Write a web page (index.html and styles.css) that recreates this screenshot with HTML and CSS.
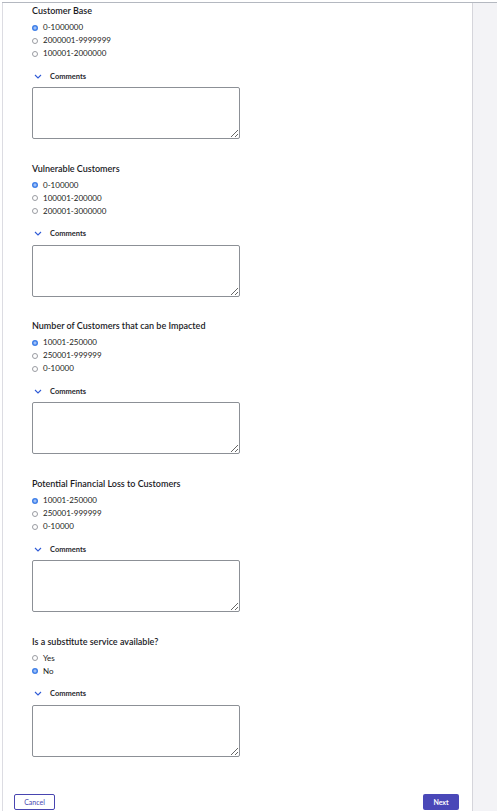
FILE: index.html
```html
<!DOCTYPE html>
<html lang="en">
<head>
  <meta charset="UTF-8">
  <meta name="viewport" content="width=device-width, initial-scale=1.0">
  <link rel="stylesheet" href="styles.css">
</head>
<body>
  <div class="page">
    <div class="main">

      <div class="question">
        <div class="q-title">Customer Base</div>
        <div class="options">
          <div class="option"><span class="radio checked"></span>0-1000000</div>
          <div class="option"><span class="radio"></span>2000001-9999999</div>
          <div class="option"><span class="radio"></span>100001-2000000</div>
        </div>
        <div class="comments-toggle">
          <svg class="chevron" width="8" height="5" viewBox="0 0 8 5"><path d="M1 1 L4 4 L7 1" fill="none" stroke="#2f5bd6" stroke-width="1.1"/></svg>
          Comments
        </div>
        <textarea class="comment-box"></textarea>
      </div>

      <div class="question">
        <div class="q-title">Vulnerable Customers</div>
        <div class="options">
          <div class="option"><span class="radio checked"></span>0-100000</div>
          <div class="option"><span class="radio"></span>100001-200000</div>
          <div class="option"><span class="radio"></span>200001-3000000</div>
        </div>
        <div class="comments-toggle">
          <svg class="chevron" width="8" height="5" viewBox="0 0 8 5"><path d="M1 1 L4 4 L7 1" fill="none" stroke="#2f5bd6" stroke-width="1.1"/></svg>
          Comments
        </div>
        <textarea class="comment-box"></textarea>
      </div>

      <div class="question">
        <div class="q-title">Number of Customers that can be Impacted</div>
        <div class="options">
          <div class="option"><span class="radio checked"></span>10001-250000</div>
          <div class="option"><span class="radio"></span>250001-999999</div>
          <div class="option"><span class="radio"></span>0-10000</div>
        </div>
        <div class="comments-toggle">
          <svg class="chevron" width="8" height="5" viewBox="0 0 8 5"><path d="M1 1 L4 4 L7 1" fill="none" stroke="#2f5bd6" stroke-width="1.1"/></svg>
          Comments
        </div>
        <textarea class="comment-box"></textarea>
      </div>

      <div class="question">
        <div class="q-title">Potential Financial Loss to Customers</div>
        <div class="options">
          <div class="option"><span class="radio checked"></span>10001-250000</div>
          <div class="option"><span class="radio"></span>250001-999999</div>
          <div class="option"><span class="radio"></span>0-10000</div>
        </div>
        <div class="comments-toggle">
          <svg class="chevron" width="8" height="5" viewBox="0 0 8 5"><path d="M1 1 L4 4 L7 1" fill="none" stroke="#2f5bd6" stroke-width="1.1"/></svg>
          Comments
        </div>
        <textarea class="comment-box"></textarea>
      </div>

      <div class="question">
        <div class="q-title">Is a substitute service available?</div>
        <div class="options">
          <div class="option"><span class="radio"></span>Yes</div>
          <div class="option"><span class="radio checked"></span>No</div>
        </div>
        <div class="comments-toggle">
          <svg class="chevron" width="8" height="5" viewBox="0 0 8 5"><path d="M1 1 L4 4 L7 1" fill="none" stroke="#2f5bd6" stroke-width="1.1"/></svg>
          Comments
        </div>
        <textarea class="comment-box"></textarea>
      </div>

      <div class="footer">
        <button class="btn btn-cancel">Cancel</button>
        <button class="btn btn-next">Next</button>
      </div>
    </div>
    <div class="side"></div>
  </div>
</body>
</html>
```

FILE: styles.css
```css
html, body {
  margin: 0;
  padding: 0;
  height: 100%;
  background: #ffffff;
  font-family: Lato, "Open Sans", sans-serif;
  color: #1b1b1f;
}

body {
  padding-top: 2px;
  padding-left: 2px;
  box-sizing: border-box;
}

.page {
  display: flex;
  height: 100%;
  border-top: 1px solid #b4b8c0;
}

.main {
  width: 440px;
  flex-shrink: 0;
  border-left: 1px solid #dcdce2;
  display: flex;
  flex-direction: column;
  padding: 2px 0 2px 29px;
  box-sizing: content-box;
}

.side {
  flex: 1;
  background-color: #f3f3f6;
  border-left: 1px solid #d5d5db;
}

.question {
  margin-bottom: 23.7px;
}

.q-title {
  font-size: 9px;
  font-weight: 600;
  line-height: 12px;
  margin-bottom: 4px;
}

.option {
  display: flex;
  align-items: center;
  font-size: 8px;
  line-height: 13px;
  height: 13px;
  color: #222;
}

.radio {
  width: 6px;
  height: 6px;
  border-radius: 50%;
  border: 1px solid #9a9ca2;
  box-sizing: border-box;
  margin-right: 5px;
}

.radio.checked {
  border: none;
  background: radial-gradient(circle, #9fc0f7 0, #9fc0f7 1px, #3d7ee8 2px);
}

.comments-toggle {
  display: flex;
  align-items: center;
  margin-top: 10px;
  height: 12px;
  font-size: 7.5px;
  font-weight: 700;
  color: #2a2a30;
}

.chevron {
  margin: 0 8px 0 2px;
}

.comment-box {
  display: block;
  margin-top: 5px;
  width: 208px;
  height: 52px;
  box-sizing: border-box;
  border: 1px solid #8c9096;
  border-radius: 2px;
  padding: 4px;
  font-family: inherit;
}

.footer {
  margin-top: auto;
  display: flex;
  justify-content: space-between;
  margin-left: -18px;
  width: 445px;
}

.btn {
  font-family: inherit;
  font-size: 7px;
  height: 16px;
  border-radius: 2px;
  padding: 0;
  cursor: pointer;
}

.btn-cancel {
  width: 41px;
  background: #ffffff;
  color: #4845b0;
  border: 1px solid #4845b0;
}

.btn-next {
  width: 36px;
  background: #4a48b8;
  color: #ffffff;
  border: none;
  font-weight: 700;
}
```
